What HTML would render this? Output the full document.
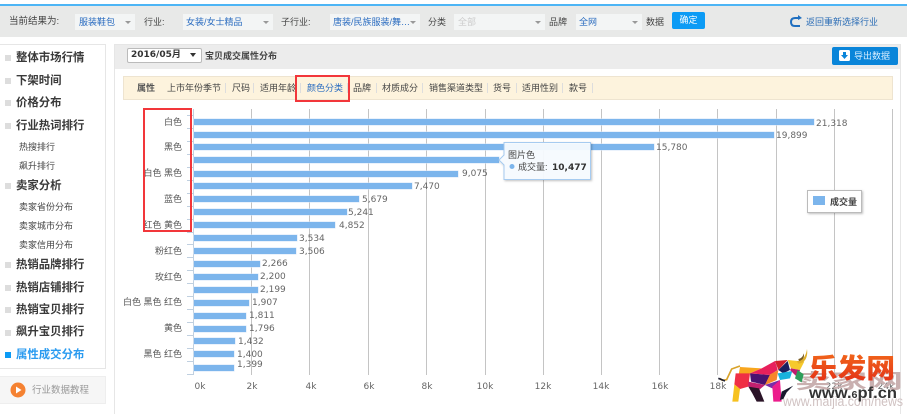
<!DOCTYPE html>
<html><head><meta charset="utf-8"><style>
*{margin:0;padding:0;box-sizing:border-box}
html,body{width:907px;height:414px;overflow:hidden;background:#fff}
body{position:relative;font-family:"Liberation Sans","Noto Sans CJK SC",sans-serif;font-size:9px;color:#444}
#w{position:absolute;left:0;top:0;width:907px;height:414px;background:#fff;filter:blur(.35px)}
.a{position:absolute;white-space:nowrap;line-height:12px}
.box{position:absolute;background:#f3f5f5;top:14px;height:16px}
.box i{position:absolute;right:4px;top:7px;border:3px solid transparent;border-top:3px solid #999;border-bottom:0}
.bl{color:#2a6cc0}
.s{position:absolute;left:5px;width:6px;height:6px;background:#ddd}
.m{position:absolute;left:16px;font-size:11.4px;line-height:14px;font-weight:bold;color:#3a3a3a;white-space:nowrap}
.sub{position:absolute;left:19px;font-size:9px;line-height:12px;color:#444;white-space:nowrap}
.sep{position:absolute;top:83px;height:10px;width:1px;background:#ddd}
svg text{font-family:"DejaVu Sans",sans-serif;font-size:9px;fill:#666}
svg text.c{font-family:"Liberation Sans","Noto Sans CJK SC",sans-serif;fill:#555;text-anchor:end}
</style></head><body><div id="w">
<div class="a" style="left:0;top:4px;width:907px;height:2px;background:#4db5f5"></div>
<div class="a" style="left:0;top:6px;width:907px;height:31px;background:#e8e9e8"></div>
<div class="a" style="left:9px;top:16px;font-size:9.5px">当前结果为:</div>
<div class="box" style="left:75px;width:60px"><i></i></div><div class="a bl" style="left:79px;top:16px">服装鞋包</div>
<div class="a" style="left:144px;top:16px">行业:</div>
<div class="box" style="left:183px;width:90px"><i></i></div><div class="a bl" style="left:186px;top:16px">女装/女士精品</div>
<div class="a" style="left:281px;top:16px">子行业:</div>
<div class="box" style="left:330px;width:90px"><i></i></div><div class="a bl" style="left:333px;top:16px">唐装/民族服装/舞…</div>
<div class="a" style="left:428px;top:16px">分类</div>
<div class="box" style="left:454px;width:91px"><i></i></div><div class="a" style="left:458px;top:16px;color:#ccc">全部</div>
<div class="a" style="left:549px;top:16px">品牌</div>
<div class="box" style="left:576px;width:66px"><i></i></div><div class="a bl" style="left:579px;top:16px">全网</div>
<div class="a" style="left:646px;top:16px">数据</div>
<div class="a" style="left:672px;top:12px;width:33px;height:17px;background:#0c9bf5;border-radius:2px;color:#fff;text-align:center;line-height:17px">确定</div>
<svg class="a" style="left:789px;top:15px" width="14" height="14"><path d="M11 3H6Q2 3 2 7Q2 11 6 11H11" fill="none" stroke="#1f6fc0" stroke-width="2"/><path d="M9 0L13 3L9 5Z" fill="#1f6fc0"/></svg>
<div class="a" style="left:806px;top:16px;color:#2a6cb5">返回重新选择行业</div>

<!-- sidebar -->
<div class="a" style="left:0;top:44px;width:106px;height:325px;border:1px solid #e6e6e6;border-left:0"></div>
<div class="s" style="top:55px"></div><div class="m" style="top:51px">整体市场行情</div>
<div class="s" style="top:78px"></div><div class="m" style="top:74px">下架时间</div>
<div class="s" style="top:100px"></div><div class="m" style="top:96px">价格分布</div>
<div class="s" style="top:123px"></div><div class="m" style="top:119px">行业热词排行</div>
<div class="sub" style="top:141px">热搜排行</div>
<div class="sub" style="top:160px">飙升排行</div>
<div class="s" style="top:183px"></div><div class="m" style="top:179px">卖家分析</div>
<div class="sub" style="top:201px">卖家省份分布</div>
<div class="sub" style="top:220px">卖家城市分布</div>
<div class="sub" style="top:239px">卖家信用分布</div>
<div class="s" style="top:262px"></div><div class="m" style="top:258px">热销品牌排行</div>
<div class="s" style="top:285px"></div><div class="m" style="top:281px">热销店铺排行</div>
<div class="s" style="top:307px"></div><div class="m" style="top:303px">热销宝贝排行</div>
<div class="s" style="top:330px"></div><div class="m" style="top:325px">飙升宝贝排行</div>
<div class="s" style="top:352px;background:#0c9bf5"></div><div class="m" style="top:348px;color:#2a9bf0">属性成交分布</div>
<div class="a" style="left:0;top:376px;width:106px;height:28px;background:#f6f6f6;border:1px solid #eee;border-left:0"></div>
<svg class="a" style="left:10px;top:382px" width="16" height="16"><circle cx="8" cy="8" r="7.5" fill="#f58232"/><path d="M6 4.5L11.5 8L6 11.5Z" fill="#fff"/></svg>
<div class="a" style="left:32px;top:385px;color:#999;font-size:9.5px">行业数据教程</div>

<!-- main panel -->
<div class="a" style="left:114px;top:44px;width:787px;height:370px;border:1px solid #e6e6e6;border-bottom:0"></div>
<div class="a" style="left:115px;top:45px;width:785px;height:24px;background:#ececec"></div>
<div class="a" style="left:127px;top:48px;width:75px;height:15px;background:#fff;border:1px solid #bbb;border-radius:2px;font:bold 9px/13px 'DejaVu Sans','Noto Sans CJK SC',sans-serif;padding-left:3px;color:#333">2016/05月<span style="position:absolute;right:5px;top:4px;border:3px solid transparent;border-top:4px solid #333;border-bottom:0"></span></div>
<div class="a" style="left:205px;top:50px;font-weight:bold;color:#444">宝贝成交属性分布</div>
<div class="a" style="left:832px;top:47px;width:66px;height:18px;background:#0a85d9;border-radius:2px"></div>
<svg class="a" style="left:839px;top:50px" width="12" height="12"><rect width="11" height="11" rx="1.5" fill="#fff"/><path d="M4 2H7V5H9L5.5 9L2 5H4Z" fill="#0a85d9"/></svg>
<div class="a" style="left:854px;top:50px;color:#d8eeff">导出数据</div>

<div class="a" style="left:123px;top:76px;width:770px;height:24px;background:#fdf3dd;border:1px solid #eee4d0"></div>
<div class="a" style="left:137px;top:82px;font-weight:bold;color:#555">属性</div>
<div class="a" style="left:167px;top:82px">上市年份季节</div>
<div class="a" style="left:232px;top:82px">尺码</div>
<div class="a" style="left:260px;top:82px">适用年龄</div>
<div class="a" style="left:307px;top:82px;color:#2a6cc0">颜色分类</div>
<div class="a" style="left:353px;top:82px">品牌</div>
<div class="a" style="left:382px;top:82px">材质成分</div>
<div class="a" style="left:429px;top:82px">销售渠道类型</div>
<div class="a" style="left:493px;top:82px">货号</div>
<div class="a" style="left:522px;top:82px">适用性别</div>
<div class="a" style="left:569px;top:82px">款号</div>
<div class="sep" style="left:225px"></div><div class="sep" style="left:253px"></div><div class="sep" style="left:300px"></div><div class="sep" style="left:347px"></div><div class="sep" style="left:376px"></div><div class="sep" style="left:422px"></div><div class="sep" style="left:487px"></div><div class="sep" style="left:516px"></div><div class="sep" style="left:562px"></div><div class="sep" style="left:592px"></div>

<!-- chart -->
<svg class="a" style="left:0;top:0" width="907" height="414">
<defs>
<linearGradient id="lg" x1="0" y1="0" x2="0" y2="1"><stop offset="0" stop-color="#f4711a"/><stop offset="1" stop-color="#e22a18"/></linearGradient>
<filter id="sh" x="-10%" y="-10%" width="125%" height="130%"><feDropShadow dx="1" dy="1" stdDeviation="1" flood-color="#000" flood-opacity=".25"/></filter>
</defs>
<g stroke="#c4c4c4" stroke-width="1">
<path d="M251.5 109V375M309.5 109V375M368.5 109V375M426.5 109V375M485.5 109V375M543.5 109V375M601.5 109V375M659.5 109V375M717.5 109V375M776.5 109V375M834.5 109V375M892.5 109V375"/>
</g>
<path d="M193.5 109V375M187 115.5H193M187 128.5H193M187 141.5H193M187 154.5H193M187 167.5H193M187 180.5H193M187 193.5H193M187 206.5H193M187 219.5H193M187 232.5H193M187 244.5H193M187 257.5H193M187 270.5H193M187 283.5H193M187 296.5H193M187 309.5H193M187 322.5H193M187 335.5H193M187 348.5H193M187 361.5H193M187 374.5H193" stroke="#c0d0e0" fill="none"/>
<g fill="#7cb5ec" stroke="#d6e6f8" stroke-width="1" style="paint-order:stroke">
<rect x="194" y="119" width="620" height="6"/>
<rect x="194" y="132" width="580" height="6"/>
<rect x="194" y="144" width="460" height="6"/>
<rect x="194" y="157" width="305" height="6"/>
<rect x="194" y="171" width="264" height="6"/>
<rect x="194" y="183" width="218" height="6"/>
<rect x="194" y="196" width="165" height="6"/>
<rect x="194" y="209" width="153" height="6"/>
<rect x="194" y="222" width="141" height="6"/>
<rect x="194" y="235" width="103" height="6"/>
<rect x="194" y="248" width="102" height="6"/>
<rect x="194" y="261" width="66" height="6"/>
<rect x="194" y="274" width="64" height="6"/>
<rect x="194" y="287" width="64" height="6"/>
<rect x="194" y="300" width="55" height="6"/>
<rect x="194" y="313" width="52" height="6"/>
<rect x="194" y="326" width="52" height="6"/>
<rect x="194" y="338" width="41" height="6"/>
<rect x="194" y="351" width="40" height="6"/>
<rect x="194" y="365" width="40" height="6"/>
</g>
<text x="816" y="126">21,318</text>
<text x="776" y="138">19,899</text>
<text x="656" y="150">15,780</text>
<text x="462" y="176">9,075</text>
<text x="414" y="189">7,470</text>
<text x="362" y="202">5,679</text>
<text x="348" y="215">5,241</text>
<text x="339" y="228">4,852</text>
<text x="299" y="241">3,534</text>
<text x="299" y="254">3,506</text>
<text x="262" y="266">2,266</text>
<text x="260" y="279">2,200</text>
<text x="260" y="292">2,199</text>
<text x="252" y="305">1,907</text>
<text x="249" y="318">1,811</text>
<text x="249" y="331">1,796</text>
<text x="238" y="344">1,432</text>
<text x="237" y="357">1,400</text>
<text x="237" y="367">1,399</text>
<text class="c" x="182" y="125">白色</text>
<text class="c" x="182" y="150">黑色</text>
<text class="c" x="182" y="176">白色 黑色</text>
<text class="c" x="182" y="202">蓝色</text>
<text class="c" x="182" y="228">红色 黄色</text>
<text class="c" x="182" y="254">粉红色</text>
<text class="c" x="182" y="280">玫红色</text>
<text class="c" x="182" y="305">白色 黑色 红色</text>
<text class="c" x="182" y="331">黄色</text>
<text class="c" x="182" y="357">黑色 红色</text>
<g text-anchor="middle">
<text x="200" y="389">0k</text><text x="252" y="389">2k</text><text x="311" y="389">4k</text><text x="369" y="389">6k</text><text x="427" y="389">8k</text><text x="485" y="389">10k</text><text x="543" y="389">12k</text><text x="601" y="389">14k</text><text x="660" y="389">16k</text><text x="718" y="389">18k</text><text x="834" y="389">22k</text><text x="886" y="389">24k</text>
</g>
<path d="M144 109H191V231H144Z" fill="none" stroke="#f2363a" stroke-width="2"/>
<path d="M296 76H349V101H296Z" fill="none" stroke="#f2363a" stroke-width="2"/>
<!-- tooltip -->
<path d="M504 142.500H590.500V179.500H504V165L499 160L504 155Z" fill="#f7fbff" fill-opacity=".95" stroke="#a6cbf0" filter="url(#sh)"/>
<text class="c" style="text-anchor:start;fill:#444" x="508" y="158">图片色</text>
<circle cx="512" cy="166.500" r="2.500" fill="#7cb5ec"/>
<text class="c" style="text-anchor:start;fill:#444" x="518" y="170">成交量:</text>
<text x="552" y="170" style="font-weight:bold;fill:#333">10,477</text>
<!-- legend -->
<rect x="807.500" y="190.500" width="54" height="22" fill="#fff" stroke="#bbb" filter="url(#sh)"/>
<rect x="813" y="196" width="12" height="9" fill="#7cb5ec"/>
<text class="c" x="857" y="205" style="font-weight:bold;fill:#444">成交量</text>
<!-- watermark -->
<text x="795" y="388" textLength="108" lengthAdjust="spacingAndGlyphs" style='font-family:"Noto Sans CJK SC",sans-serif;font-size:20px;fill:#c9b0b0;font-weight:bold'>卖家网</text>
<text x="783" y="406" textLength="120" lengthAdjust="spacingAndGlyphs" style='font-family:"Liberation Sans",sans-serif;font-size:13.500px;fill:#d0c2c2'>www.maijia.com/news</text>
<!-- bull -->
<g transform="translate(715 345) scale(.3333)">
<path d="M15 100L22 106L35 104L50 72L75 63" fill="none" stroke="#d9a32a" stroke-width="5"/>
<path d="M10 100L30 108" fill="none" stroke="#223" stroke-width="5"/>
<path d="M75 66L140 70L105 85L70 95Z" fill="#f8a61e"/>
<path d="M62 85L105 85L100 125L75 132L58 118Z" fill="#ef2f45"/>
<path d="M58 118L75 132L70 170L52 170Z" fill="#f6c11f"/>
<path d="M105 85L165 90L150 120L108 110Z" fill="#4a1270"/>
<path d="M100 110L150 120L132 135L100 125Z" fill="#c2206f"/>
<path d="M100 125L132 130L148 170L125 170L112 145Z" fill="#2b1428"/>
<path d="M140 70L180 48L188 75L165 90L105 85Z" fill="#e8205c"/>
<path d="M180 48L218 45L190 75Z" fill="#d3202c"/>
<path d="M190 75L218 48L225 75L205 85Z" fill="#1b1f5e"/>
<path d="M165 88L190 75L185 105L150 120Z" fill="#f6862a"/>
<path d="M188 85L232 78L225 100L195 105Z" fill="#19b3dd"/>
<path d="M150 120L195 105L172 130Z" fill="#7a2da8"/>
<path d="M172 125L195 105L200 170L175 170Z" fill="#ec1d8c"/>
<path d="M218 45L268 50L255 75L228 70Z" fill="#f6c92c"/>
<path d="M228 70L255 75L248 98L225 75Z" fill="#c01b6e"/>
<path d="M248 75L266 88L260 112L240 100Z" fill="#2e9e5b"/>
<path d="M195 165L200 140L235 122L215 142L205 162Z" fill="#181a2e"/>
<path d="M245 48C260 48 272 38 276 12C280 38 268 55 250 56Z" fill="#e0b02a"/>
<path d="M250 42C258 40 264 35 266 25C270 38 262 46 252 48Z" fill="#7a5c20"/>
</g>
<text x="809" y="378" textLength="86" lengthAdjust="spacingAndGlyphs" style='font-family:"Noto Sans CJK SC",sans-serif;font-size:27px;font-weight:900;fill:url(#lg)'>乐发网</text>
<text x="809" y="398" textLength="88" lengthAdjust="spacingAndGlyphs" style='font-family:"Liberation Sans",sans-serif;font-size:15.500px;font-weight:bold;fill:#333'>www.<tspan font-size="10">6</tspan>pf.cn</text>
</svg>
</div></body></html>
